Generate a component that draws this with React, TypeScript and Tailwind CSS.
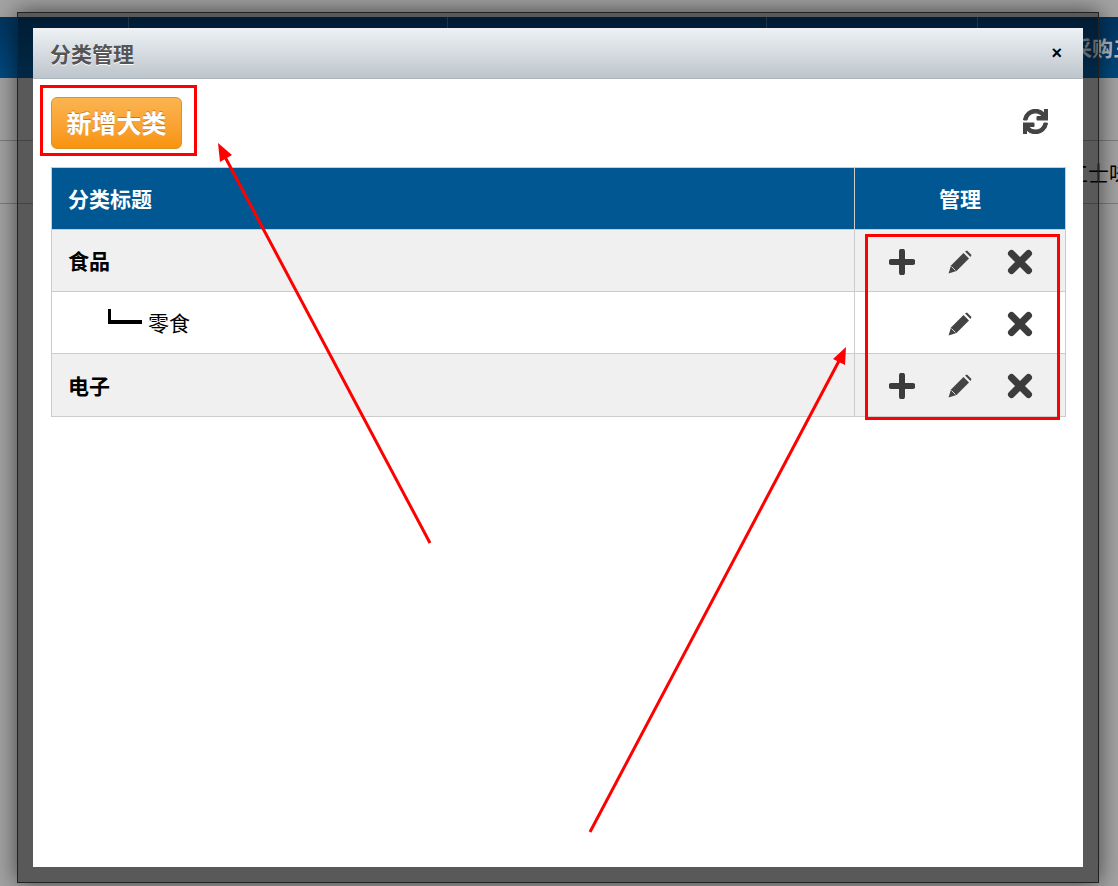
import { FaSync } from "react-icons/fa";

const rows = [
    { name: "食品", add: true, child: false },
    { name: "零食", add: false, child: true },
    { name: "电子", add: true, child: false },
];

function PlusIcon() {
    return (
        <svg width="26" height="26" viewBox="0 0 26 26" className="text-[#3c3c3c] blur-[0.5px]">
            <path d="M13 2.500V23.500M2.500 13H23.500" stroke="currentColor" strokeWidth="6" strokeLinecap="round" />
        </svg>
    );
}

function PencilIcon() {
    return (
        <svg width="24" height="24" viewBox="0 0 24 24" className="text-[#444444] blur-[0.4px]">
            <path d="M0.500 23.500L3 15.500L15.500 3L21 8.500L8.500 21Z" fill="currentColor" />
            <path d="M17 1.500L19 0.500L23.500 5L22.500 7Z" fill="currentColor" />
            <path d="M3.500 16.500L7.500 20.500" stroke="#ffffff" strokeWidth="0.800" />
        </svg>
    );
}

function CloseIcon() {
    return (
        <svg width="26" height="26" viewBox="0 0 26 26" className="text-[#3c3c3c] blur-[0.5px]">
            <path d="M4.500 4.500L21.500 21.500M21.500 4.500L4.500 21.500" stroke="currentColor" strokeWidth="7" strokeLinecap="round" />
        </svg>
    );
}

export default function App() {
    return (
        <div className="relative h-[886px] w-[1118px] overflow-hidden bg-[#a3a3a3] font-['Liberation_Sans','Noto_Sans_CJK_SC',sans-serif]">
            {/* page behind the dialog */}
            <div className="pt-[17px]">
                <div className="flex h-[61px] bg-gradient-to-b from-[#00355f] to-[#004a80]">
                    <div className="w-[129px] shrink-0 border-r border-[#3d5f7a]" />
                    <div className="w-[319px] shrink-0 border-r border-[#3d5f7a]" />
                    <div className="w-[319px] shrink-0 border-r border-[#3d5f7a]" />
                    <div className="w-[211px] shrink-0 border-r border-[#3d5f7a]" />
                    <div className="flex-1 pl-[93px] pt-[16px] text-[21px] font-bold whitespace-nowrap text-[#b5bcc4]">采购三</div>
                </div>
                <div className="h-[63px] border-b border-[#7d7d7d]" />
                <div className="h-[63px] border-b border-[#7d7d7d] pl-[1067px] pt-[17px] text-[21px] whitespace-nowrap text-black">工士味</div>
            </div>

            {/* dark frame round the dialog */}
            <div className="absolute top-[12px] left-[17px] h-[871px] w-[1082px] border border-[#222222] bg-black/45 shadow-[0_0_22px_rgba(0,0,0,0.6)]" />

            <div className="absolute top-[28px] left-[33px] flex h-[839px] w-[1050px] flex-col bg-white">
                <div className="flex h-[51px] items-center justify-between border-b border-[#aeb6be] bg-gradient-to-b from-[#eef2f5] to-[#bdc5cc] pr-[21px] pl-[17px]">
                    <span className="pt-[3px] text-[21px] leading-[50px] font-bold text-[#555555] [text-shadow:0_1px_0_#ffffff]">分类管理</span>
                    <span className="text-[18px] leading-none font-bold text-black">×</span>
                </div>
                <div className="px-[18px] pt-[18px]">
                    <div className="flex h-[52px] items-center justify-between">
                        <button className="h-[52px] w-[131px] rounded-[6px] border border-[#d9932b] bg-gradient-to-b from-[#fbb450] to-[#f89406] pt-[3px] text-[25px] font-bold text-white [text-shadow:0_-1px_0_rgba(0,0,0,0.25)]">新增大类</button>
                        <FaSync size={25} stroke="currentColor" strokeWidth={24} className="mr-[17px] mb-[3px] text-[#444444] blur-[0.4px]" />
                    </div>
                    <table className="mt-[18px] w-[1015px] table-fixed border-collapse text-[21px]">
                        <thead>
                            <tr className="h-[62px] bg-[#005791] font-bold text-white">
                                <th className="w-[803px] border border-[#cccccc] pt-[3px] pl-[16px] text-left">分类标题</th>
                                <th className="border border-[#cccccc] pt-[3px] text-center">管理</th>
                            </tr>
                        </thead>
                        <tbody>
                            {rows.map((row, i) => (
                                <tr key={row.name} className={`${i === 2 ? "h-[63px]" : "h-[62px]"} ${row.child ? "bg-white" : "bg-[#f0f0f0]"}`}>
                                    <td className="border border-[#cccccc] pt-[3px] pl-[16px] text-black">
                                        {row.child ? (
                                            <div className="flex items-end pl-[40px]">
                                                <div className="mb-[16px] h-[15px] w-[34px] border-b-[4px] border-l-[3px] border-black" />
                                                <span className="ml-[6px] font-normal">{row.name}</span>
                                            </div>
                                        ) : (
                                            <span className="font-bold">{row.name}</span>
                                        )}
                                    </td>
                                    <td className="border border-[#cccccc] pt-[2px]">
                                        <div className="flex items-center pl-[34px]">
                                            <div className="w-[26px]">{row.add && <PlusIcon />}</div>
                                            <div className="ml-[33px]"><PencilIcon /></div>
                                            <div className="ml-[35px]"><CloseIcon /></div>
                                        </div>
                                    </td>
                                </tr>
                            ))}
                        </tbody>
                    </table>
                </div>
            </div>

            {/* red annotations drawn on top of the screenshot */}
            <div className="absolute top-[85px] left-[40px] h-[71px] w-[157px] border-[3px] border-[#ff0000]" />
            <div className="absolute top-[234px] left-[865px] h-[186px] w-[195px] border-[3px] border-[#ff0000]" />
            <svg className="absolute top-0 left-0" width="1118" height="886" viewBox="0 0 1118 886">
                <path d="M430 543L224 155" stroke="#ff0000" strokeWidth="3" fill="none" />
                <path d="M218 143L232 155L220 162Z" fill="#ff0000" />
                <path d="M590 832L840 359" stroke="#ff0000" strokeWidth="3" fill="none" />
                <path d="M846 347L845 365L833 359Z" fill="#ff0000" />
            </svg>
        </div>
    );
}
